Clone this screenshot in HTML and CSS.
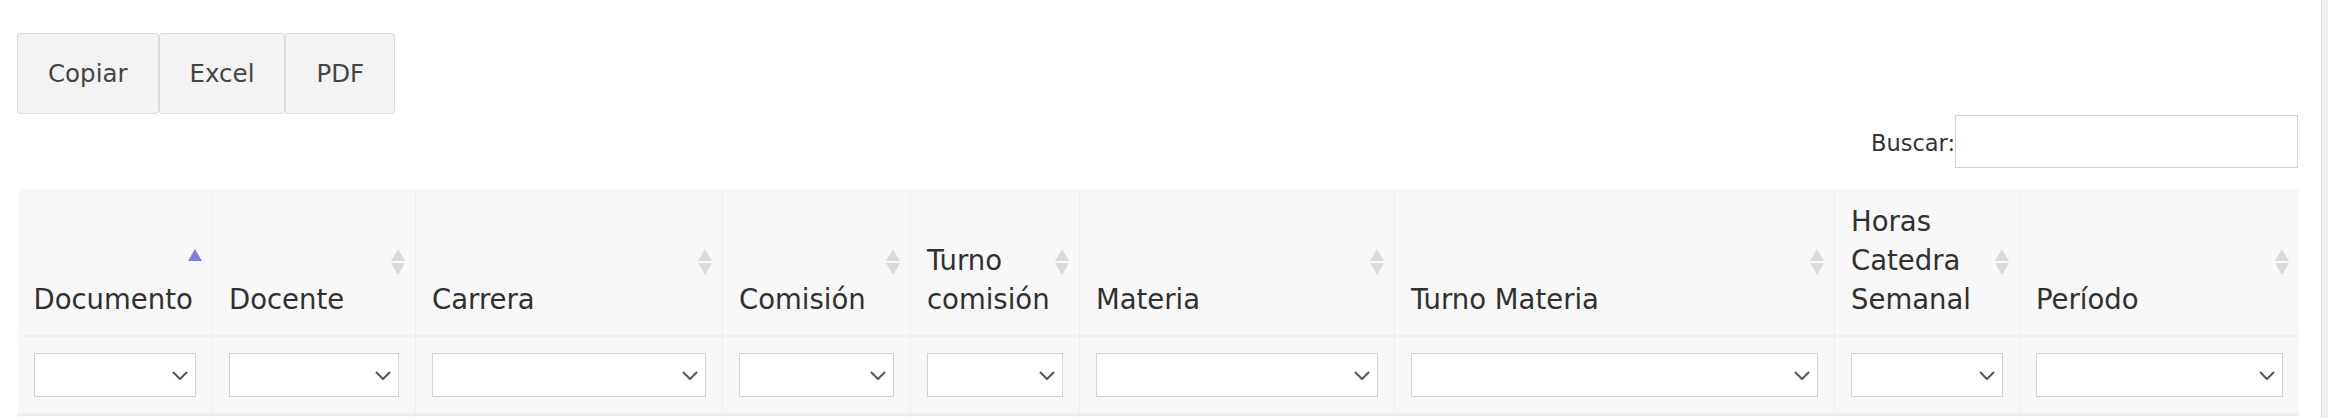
FILE: index.html
```html
<!DOCTYPE html>
<html lang="es">
<head>
<meta charset="utf-8">
<title>Docentes</title>
<link rel="stylesheet" href="styles.css">
</head>
<body>
<div class="page">
  <main class="main">
    <div class="buttons">
      <button class="btn">Copiar</button>
      <button class="btn">Excel</button>
      <button class="btn">PDF</button>
    </div>
    <div class="search">
      <label class="search-label">Buscar:</label><input class="search-input" type="search">
    </div>
    <table class="grid">
      <colgroup>
        <col style="width:195px"><col style="width:203px"><col style="width:307px"><col style="width:188px"><col style="width:169px"><col style="width:315px"><col style="width:440px"><col style="width:185px"><col style="width:279px">
      </colgroup>
      <thead>
        <tr class="head">
          <th class="sorted">Documento<span class="sort"><span class="up active"></span></span></th>
          <th>Docente<span class="sort"><span class="up"></span><span class="down"></span></span></th>
          <th>Carrera<span class="sort"><span class="up"></span><span class="down"></span></span></th>
          <th>Comisión<span class="sort"><span class="up"></span><span class="down"></span></span></th>
          <th>Turno comisión<span class="sort"><span class="up"></span><span class="down"></span></span></th>
          <th>Materia<span class="sort"><span class="up"></span><span class="down"></span></span></th>
          <th>Turno Materia<span class="sort"><span class="up"></span><span class="down"></span></span></th>
          <th>Horas Catedra Semanal<span class="sort"><span class="up"></span><span class="down"></span></span></th>
          <th>Período<span class="sort"><span class="up"></span><span class="down"></span></span></th>
        </tr>
        <tr class="filters">
          <td><div class="sel"><select></select><svg class="chev" viewBox="0 0 16 9"><path d="M1 1 L8 8 L15 1" fill="none" stroke="#555" stroke-width="2"/></svg></div></td>
          <td><div class="sel"><select></select><svg class="chev" viewBox="0 0 16 9"><path d="M1 1 L8 8 L15 1" fill="none" stroke="#555" stroke-width="2"/></svg></div></td>
          <td><div class="sel"><select></select><svg class="chev" viewBox="0 0 16 9"><path d="M1 1 L8 8 L15 1" fill="none" stroke="#555" stroke-width="2"/></svg></div></td>
          <td><div class="sel"><select></select><svg class="chev" viewBox="0 0 16 9"><path d="M1 1 L8 8 L15 1" fill="none" stroke="#555" stroke-width="2"/></svg></div></td>
          <td><div class="sel"><select></select><svg class="chev" viewBox="0 0 16 9"><path d="M1 1 L8 8 L15 1" fill="none" stroke="#555" stroke-width="2"/></svg></div></td>
          <td><div class="sel"><select></select><svg class="chev" viewBox="0 0 16 9"><path d="M1 1 L8 8 L15 1" fill="none" stroke="#555" stroke-width="2"/></svg></div></td>
          <td><div class="sel"><select></select><svg class="chev" viewBox="0 0 16 9"><path d="M1 1 L8 8 L15 1" fill="none" stroke="#555" stroke-width="2"/></svg></div></td>
          <td><div class="sel"><select></select><svg class="chev" viewBox="0 0 16 9"><path d="M1 1 L8 8 L15 1" fill="none" stroke="#555" stroke-width="2"/></svg></div></td>
          <td><div class="sel"><select></select><svg class="chev" viewBox="0 0 16 9"><path d="M1 1 L8 8 L15 1" fill="none" stroke="#555" stroke-width="2"/></svg></div></td>
        </tr>
      </thead>
      <tbody>
        <tr class="row"><td></td><td></td><td></td><td></td><td></td><td></td><td></td><td></td><td></td></tr>
      </tbody>
    </table>
  </main>
  <div class="edge"></div>
</div>
</body>
</html>
```
FILE: styles.css
```css
html, body {
  margin: 0;
  padding: 0;
  background: #ffffff;
  height: 100%;
  overflow: hidden;
}
body {
  font-family: "DejaVu Sans", "Open Sans", sans-serif;
  color: #333333;
}
.page {
  display: flex;
  height: 418px;
  overflow: hidden;
}
.main {
  flex: 1;
  padding: 33px 23px 0 17px;
  min-width: 0;
}
.edge {
  width: 6px;
  border-left: 1px solid #dadee4;
  background: #eef0f3;
}
.buttons {
  display: flex;
}
.btn {
  height: 81px;
  padding: 0 30px;
  margin: 0;
  background: #f3f3f3;
  border: 1px solid #dcdcdc;
  border-radius: 3px;
  font-family: "DejaVu Sans", sans-serif;
  font-size: 24.5px;
  color: #444444;
}
.search {
  display: flex;
  justify-content: flex-end;
  align-items: center;
  margin-top: 1px;
}
.search-label {
  font-size: 22.5px;
  color: #333333;
  padding-top: 2px;
}
.search-input {
  box-sizing: border-box;
  width: 343px;
  height: 53px;
  margin: 0;
  border: 1px solid #cfd3da;
  border-radius: 0;
  background: #ffffff;
  outline: none;
}
.grid {
  margin-top: 21px;
  width: 2281px;
  table-layout: fixed;
  border-collapse: collapse;
}
.head th {
  position: relative;
  box-sizing: border-box;
  background: #f8f8f8;
  border-left: 1px solid #efefef;
  border-bottom: 2px solid #f1f1f1;
  padding: 13px 30px 16px 16px;
  font-size: 27.5px;
  font-weight: normal;
  line-height: 39px;
  text-align: left;
  vertical-align: bottom;
  color: #303030;
  white-space: normal;
}
.head th:first-child {
  border-left: none;
}
.sort {
  position: absolute;
  right: 10px;
  top: 50%;
  margin-top: -13px;
  display: flex;
  flex-direction: column;
  gap: 2px;
}
.up {
  width: 0;
  height: 0;
  border-left: 7px solid transparent;
  border-right: 7px solid transparent;
  border-bottom: 12px solid #dadada;
}
.up.active {
  border-bottom-color: #7a7fe0;
}
.down {
  width: 0;
  height: 0;
  border-left: 7px solid transparent;
  border-right: 7px solid transparent;
  border-top: 12px solid #dadada;
}
.filters td {
  background: #f8f8f8;
  border-left: 1px solid #efefef;
  border-bottom: 3px solid #eeeeee;
  padding: 16px 16px 16px 16px;
}
.filters td:first-child {
  border-left: none;
}
.sel {
  position: relative;
  height: 44px;
}
.sel select {
  appearance: none;
  -webkit-appearance: none;
  box-sizing: border-box;
  width: 100%;
  height: 44px;
  margin: 0;
  border: 1px solid #cfd1dc;
  border-radius: 0;
  background: #ffffff;
}
.chev {
  position: absolute;
  right: 8px;
  top: 18px;
  width: 16px;
  height: 9px;
}
.row td {
  height: 40px;
  border-left: 1px solid #eeeeee;
  background: #ffffff;
}
```
